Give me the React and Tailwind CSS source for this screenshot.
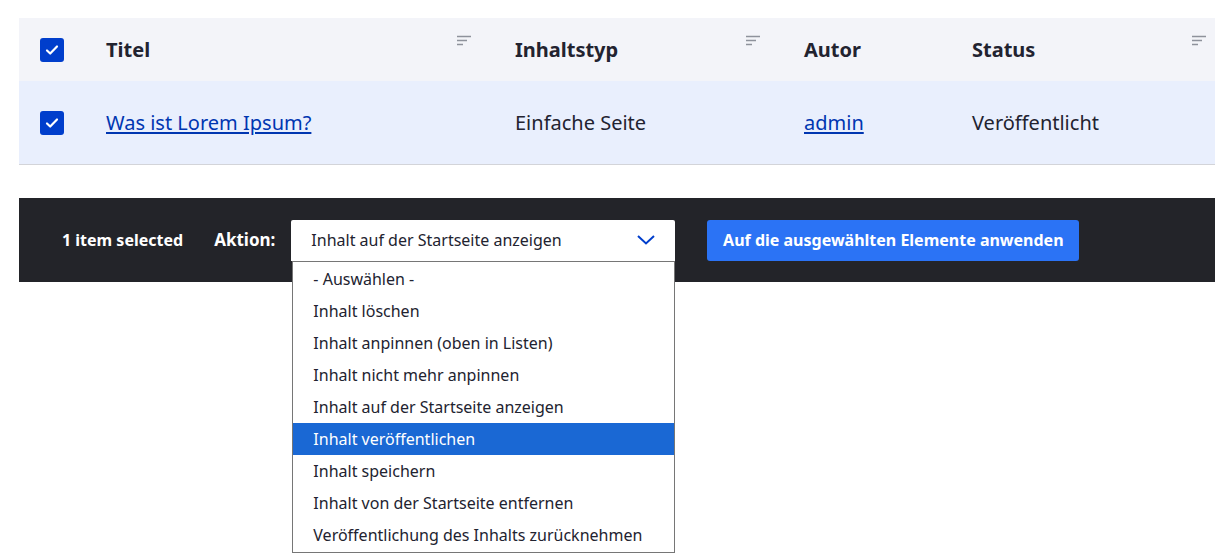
const Check = () => (
  <span className="w-6 h-6 rounded-[3px] bg-[#003ecc] flex items-center justify-center">
    <svg width="16" height="16" viewBox="0 0 16 16"><path d="M3 8.5l3.2 3L13 4.5" stroke="white" strokeWidth="2.2" fill="none" strokeLinecap="round" strokeLinejoin="round"/></svg>
  </span>
);
const Sort = () => (
  <svg width="14" height="12" viewBox="0 0 14 12"><path d="M0 1.5h14M0 5.5h10M0 9.5h6" stroke="#8e929c" strokeWidth="1.6"/></svg>
);
const items = ["- Auswählen -","Inhalt löschen","Inhalt anpinnen (oben in Listen)","Inhalt nicht mehr anpinnen","Inhalt auf der Startseite anzeigen","Inhalt veröffentlichen","Inhalt speichern","Inhalt von der Startseite entfernen","Veröffentlichung des Inhalts zurücknehmen"];
export default function App() {
  return (
    <div className="w-[1215px] h-[559px] bg-white overflow-hidden pt-[18px] pl-[19px] text-[#222330]" style={{fontFamily:'"Noto Sans","Open Sans",sans-serif'}}>
      <div className="grid grid-cols-[87px_409px_289px_168px_243px] bg-[#f3f4f9] h-[63px] items-center text-[20px] font-bold">
        <div className="pl-[21px]"><Check/></div>
        <div className="flex justify-between pr-[44px]"><span>Titel</span><Sort/></div>
        <div className="flex justify-between pr-[44px]"><span>Inhaltstyp</span><Sort/></div>
        <div>Autor</div>
        <div className="flex justify-between pr-[9px]"><span>Status</span><Sort/></div>
      </div>
      <div className="grid grid-cols-[87px_409px_289px_168px_243px] bg-[#e9effd] h-[84px] items-center text-[20px] border-b border-[#d3d4d9]">
        <div className="pl-[21px]"><Check/></div>
        <div><a className="text-[#0036b1] underline underline-offset-2">Was ist Lorem Ipsum?</a></div>
        <div>Einfache Seite</div>
        <div><a className="text-[#0036b1] underline underline-offset-2">admin</a></div>
        <div>Veröffentlicht</div>
      </div>
      <div className="mt-[33px] bg-[#232429] h-[84px] flex items-center text-white">
        <span className="ml-[43px] text-[16px] font-bold">1 item selected</span>
        <span className="ml-[31px] text-[17px] font-bold">Aktion:</span>
        <div className="relative ml-[16px]">
          <div className="w-[384px] h-[41px] bg-white text-[#222330] text-[16px] flex items-center justify-between pl-[20px] pr-[20px] rounded-t-[2px]">
            <span>Inhalt auf der Startseite anzeigen</span>
            <svg width="18" height="10" viewBox="0 0 18 10"><path d="M1 1l8 7.5L17 1" stroke="#003ecc" strokeWidth="2" fill="none"/></svg>
          </div>
          <div className="absolute left-[1px] top-[41px] w-[383px] bg-white border border-[#767676] text-[#222330] text-[16px] py-[1px]">
            {items.map((t,i)=>(
              <div key={t} className={`h-[32px] flex items-center pl-[20px] ${i===5?"bg-[#1a68d4] text-white":""}`}>{t}</div>
            ))}
          </div>
        </div>
        <button className="ml-[32px] w-[372px] h-[41px] bg-[#2b73f5] rounded-[3px] text-[16px] font-bold text-white">Auf die ausgewählten Elemente anwenden</button>
      </div>
    </div>
  );
}
